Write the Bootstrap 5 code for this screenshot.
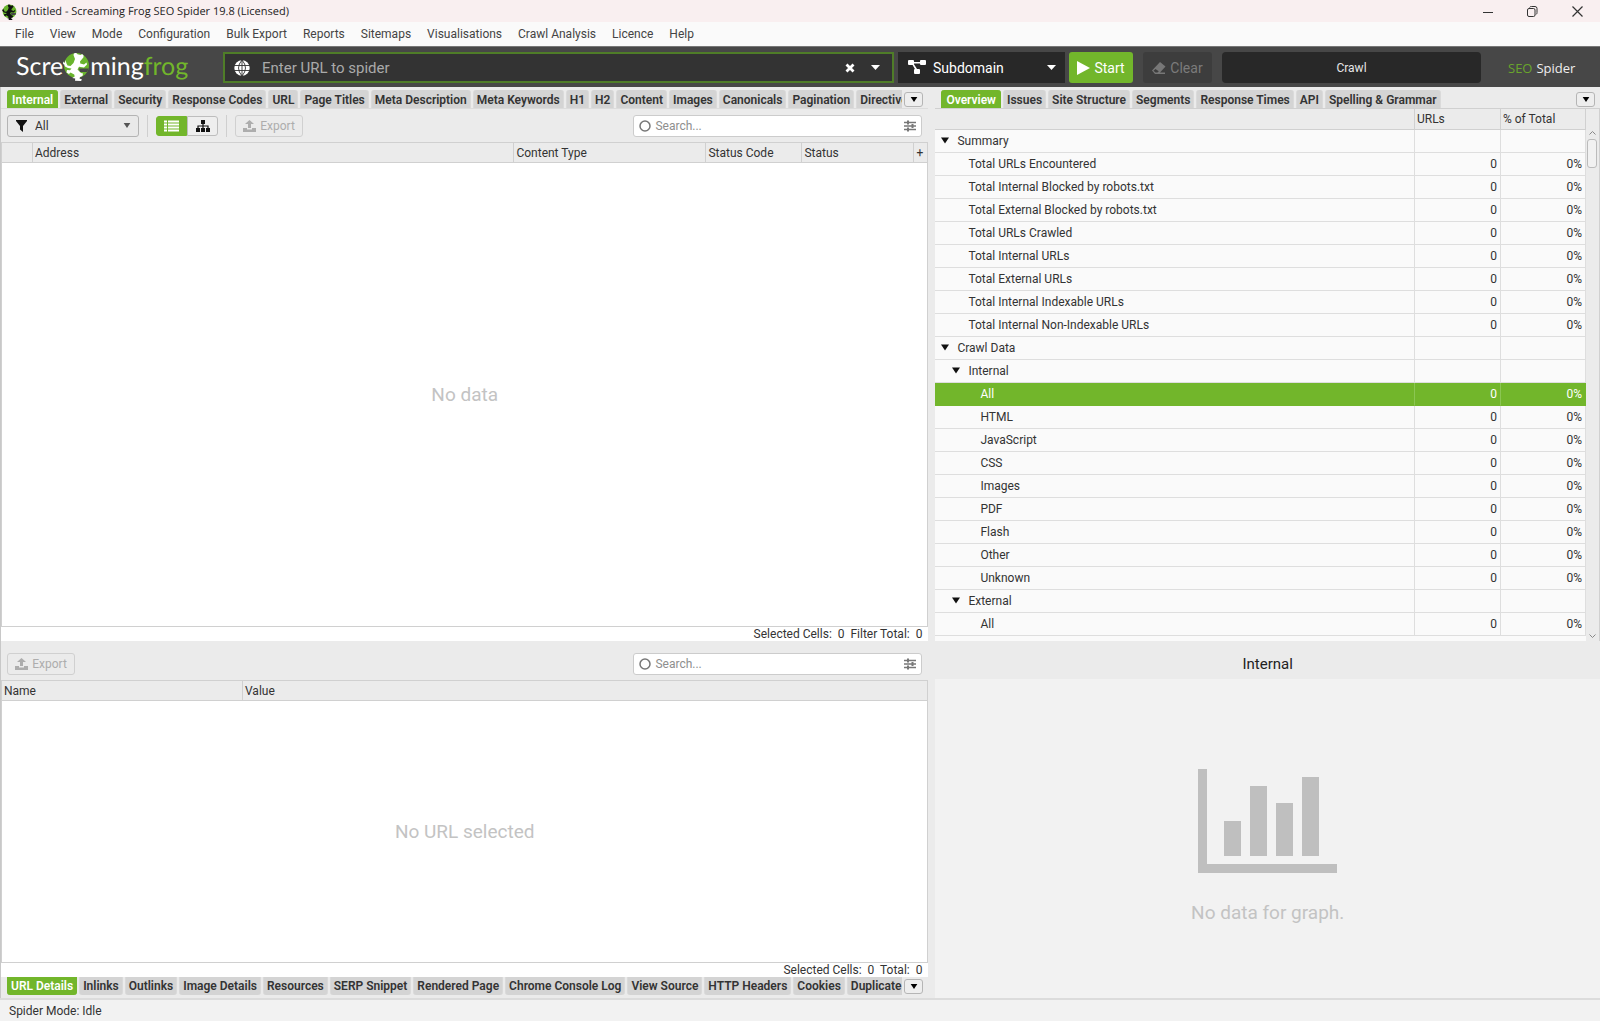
<!DOCTYPE html>
<html lang="en">
<head>
<meta charset="utf-8">
<meta name="viewport" content="width=device-width, initial-scale=1">
<title>Untitled - Screaming Frog SEO Spider 19.8 (Licensed)</title>
<link href="https://cdn.jsdelivr.net/npm/bootstrap@5.3.0/dist/css/bootstrap.min.css" rel="stylesheet">
<style>
:root{--sf-green:#72b62b;--sf-panel:#ebebeb;--sf-line:#d3d3d3;--sf-ink:#333}
body{font-family:Roboto,sans-serif;font-size:12px;line-height:16px;color:var(--sf-ink);background:#f2f2f2}
svg{display:block;flex:none}
button{border:0;background:none;padding:0;color:inherit}
.app-title{height:22px;background:#f9eff0;font-family:"Open Sans",sans-serif;font-size:11px;line-height:22px;color:#222;padding:1px 0 0 2px;text-rendering:geometricPrecision}
.win-btns button{width:45px;height:21px}
.app-menu{height:24px;background:#fafafa;padding-left:7px}
.app-menu a{color:#444;padding:4px 8px;text-decoration:none;white-space:nowrap}
.app-bar{height:41px;background:#474747;border-top:1px solid #777;padding:5px 26px 4px 16px}
.logo{width:207px;font-family:Lato,sans-serif;font-size:25px;line-height:28px;color:#fff;text-rendering:geometricPrecision}
.logo .fg{color:var(--sf-green)}
.url-box{background:#333;border:2px solid #4f7d28;padding:0 12px 0 9px;color:#fff}
.url-box input{background:none;border:0;outline:0;color:#fff;font-size:15px;min-width:0;padding:0 12px}
.url-box input::placeholder{color:#aaa;opacity:1}
.mode-box{width:167px;background:#282828;color:#fff;padding:0 9px 0 10px;margin-left:4px}
.plain-select{appearance:none;border:0;background:none;outline:0;color:inherit;min-width:0}
.mode-box select{font-size:14px;padding:0 7px}
.btn-start,.btn-clear{font-size:14px;border-radius:3px;gap:4px}
.btn-start{width:64px;background:var(--sf-green);color:#fff;margin-left:4px}
.btn-clear{width:69px;background:#3d3d3d;color:#7b7b7b;margin-left:10px}
.crawl-box{width:259px;background:#282828;color:#e6e6e6;border-radius:4px;margin:0 27px 0 10px}
.brand-name{font-family:"Open Sans",sans-serif;font-size:13px;color:#eee;white-space:nowrap;width:66px}
.brand-name span{color:#69a52c}
.pane-left{flex:928 1 0;min-width:0;background:var(--sf-panel);border-left:1px solid #c8c8c8}
.pane-right{flex:665 1 0;min-width:0;background:var(--sf-panel);margin-left:7px}
.split{background:var(--sf-panel);min-height:0}
.part-top{flex:554 1 0;min-height:0}
.part-low{flex:357 1 0;min-height:0}
.tab-strip{height:21px;padding:3px 5px 0 6px}
.tab-strip .tab-list{gap:2px;overflow:hidden;min-width:0}
.tab-strip button.tb{background:#d4d4d4;font-weight:600;padding:0 3px;white-space:nowrap;border-radius:3px 3px 0 0;flex:none;height:18px;border:1px solid #dadada;border-width:0 1px;line-height:20px}
.tab-strip button.tb.on{background:var(--sf-green);border-color:var(--sf-green);color:#fff;padding:0 4px}
.tab-strip.low{padding:0 5px 3px 6px}
.tab-strip.low button.tb{border-radius:0 0 3px 3px;line-height:18px;padding:0 3px}
.more-btn{width:19px;height:15px;border:1px solid #b5b5b5;border-radius:3px;background:#eee;flex:none;margin:2px 0 0 2px}
.tools{height:34px;padding:0 6px;border-top:1px solid #dcdcdc}
.tools.low{height:39px;border:0;padding-top:6px}
.filter-box{width:132px;height:22px;border:1px solid #b4b4b4;border-radius:3px;background:#e9e9e9;padding:0 7px 0 8px}
.filter-box select{padding:0 8px}
.vbar{width:1px;height:22px;background:#cfcfcf;margin:0 8px}
.view-btn{width:31px;height:20px;border:1px solid #bdbdbd;background:#eee;border-radius:0 3px 3px 0}
.view-btn.on{background:var(--sf-green);border-color:var(--sf-green);border-radius:3px 0 0 3px}
.btn-export{height:22px;width:68px;border:1px solid #d0d0d0;border-radius:3px;color:#adadad;gap:4px}
.find-box{width:289px;height:22px;background:#fff;border:1px solid #ccc;border-radius:3px;padding:0 5px}
.find-box input{border:0;outline:0;background:none;min-width:0;padding:0 4px}
.find-box input::placeholder{color:#8e8e8e;opacity:1}
.sheet{border:1px solid #d0d0d0;background:#fff;min-height:0}
.head-table,.tree{table-layout:fixed;width:100%;border-collapse:separate;border-spacing:0}
.head-table th{height:20px;background:var(--sf-panel);font-weight:400;padding:0 0 0 2px;border-bottom:1px solid #d0d0d0;border-left:1px solid #d0d0d0;white-space:nowrap}
.head-table th:first-child{border-left:0}
.void{font-size:19px;line-height:24px;color:#c3c3c3}
.count-line{height:14px;line-height:14px;background:#fff;padding-right:6px;white-space:pre}
.tree-wrap{background:#fafafa;overflow:hidden;min-height:0;border-top:1px solid #d0d0d0}
.tree th,.tree td{height:23px;padding:0;border-bottom:1px solid #dedede;border-right:1px solid #dedede;font-weight:400;white-space:nowrap}
.tree td{text-align:right;padding-right:3px}
.tree thead th{height:21px;background:var(--sf-panel);padding-left:2px;border-color:#d0d0d0}
.tree .d0{padding-left:6px}.tree .d1{padding-left:17px}
.tree .l1{padding-left:33px}.tree .l2{padding-left:45px}
.tree button{display:inline-block;width:16px;height:8px;vertical-align:1px;color:#111}
.tree .picked>*{background:var(--sf-green);color:#fff;border-bottom-color:var(--sf-green);border-right-color:#8bc653}
.tree .picked>:last-child{border-right-color:var(--sf-green)}
.tree-scroll{width:14px;background:var(--sf-panel);padding:22px 0 3px;border-right:1px solid #d0d0d0}
.thumb{width:10px;height:29px;border:1px solid #bbb;border-radius:3px;background:#f1f1f1;margin-top:4px}
.graph-title{height:38px;font-size:15px;color:#222}
.graph-area{background:#f2f2f2;color:#bfbfbf;padding-top:16px}
.foot{height:23px;border-top:2px solid #dcdcdc;background:#f2f2f2;padding-left:9px}
</style>
<script src="https://cdn.jsdelivr.net/npm/bootstrap@5.3.0/dist/js/bootstrap.bundle.min.js"></script>
</head>
<body class="vh-100 d-flex flex-column overflow-hidden">
<svg width="0" height="0" class="position-absolute" aria-hidden="true">
<defs>
<symbol id="frog" viewBox="0 0 27 29"><circle cx="13.500" cy="13.500" r="12.500" fill="#69b42d"/><path d="M16 16.500h9.500q-.5 2-1.500 3.500h-7z" fill="#474747"/><path d="M10.500 3q0-2.500 2.500-2 1 .3 1.500 1.200L17.500 3q2-1.500 3 .5.500 1.800-1 3l-2.500 3 .3 2 3.700 1 2.500-2 .5 2-3 3-5-.7-1.500 2.700 3.500 3.500 2 .5-.5 2.500-2.500 1-.5 1.500 2.500 1-1 1.500-6-.2.2-2.300-3-.5 2.500-1.500-.5-2-3.700-2-1.500 1.500-2.500-1.500.5-2.500 3 .3 1.500-1.800-3.500-.5L2 14.500 1 12l-1 .5.300-3 1.500 1.500.7-3 1 3.500 1 2 3 .5 3-3 1.500-4z" fill="currentColor"/></symbol>
<symbol id="tri" viewBox="0 0 8 6"><path d="M0 0h8L4 6z" fill="currentColor"/></symbol>
<symbol id="up" viewBox="0 0 13 12"><path d="M6.500 0L11 4H8v4H5V4H2zM0 8h4v1.500h5V8h4v4H0z" fill="currentColor"/></symbol>
<symbol id="tune" viewBox="0 0 12 12"><path d="M0 2.500h12M0 6h12M0 9.500h12" stroke="#777" stroke-width="1.300"/><path d="M4 .5v4M8.500 4v4M4 7.500v4" stroke="#777" stroke-width="2"/></symbol>
</defs>
</svg>

<header>
<div class="app-title d-flex align-items-center">
<svg width="15" height="16" style="color:#111"><use href="#frog"/></svg>
<span class="ms-1 flex-grow-1">Untitled - Screaming Frog SEO Spider 19.8 (Licensed)</span>
<div class="win-btns d-flex">
<button class="d-flex align-items-center justify-content-center" aria-label="Minimise"><svg width="10" height="10"><path d="M0 5.500h10" stroke="#333"/></svg></button>
<button class="d-flex align-items-center justify-content-center" aria-label="Restore"><svg width="11" height="11" fill="none" stroke="#333"><rect x=".5" y="2.500" width="7.500" height="8" rx="1.500"/><path d="M2.500 1.500q.5-1 2-1h3.500q2 0 2 2v4q0 1.500-1 2"/></svg></button>
<button class="d-flex align-items-center justify-content-center" aria-label="Close"><svg width="11" height="11"><path d="M.5.5l10 10M10.500.5l-10 10" stroke="#333" stroke-width="1.200"/></svg></button>
</div>
</div>
<nav class="app-menu d-flex align-items-center">
<a href="#">File</a><a href="#">View</a><a href="#">Mode</a><a href="#">Configuration</a><a href="#">Bulk Export</a><a href="#">Reports</a><a href="#">Sitemaps</a><a href="#">Visualisations</a><a href="#">Crawl Analysis</a><a href="#">Licence</a><a href="#">Help</a>
</nav>
<div class="app-bar d-flex align-items-stretch">
<div class="logo d-flex flex-shrink-0"><span>Scre</span><svg width="27" height="29"><use href="#frog"/></svg><span>ming</span><span class="fg">frog</span></div>
<div class="url-box d-flex align-items-center flex-grow-1">
<svg width="16" height="16" viewBox="0 0 16 16"><circle cx="8" cy="8" r="7.700" fill="#fff"/><path d="M0 5.500h16M0 10.500h16M8 0v16M8 0q-7 8 0 16M8 0q7 8 0 16" fill="none" stroke="#333" stroke-width=".9"/></svg>
<input type="text" class="flex-grow-1" placeholder="Enter URL to spider" aria-label="URL to spider">
<button aria-label="Clear URL"><svg width="10" height="10"><path d="M1.500 1.500l7 7M8.500 1.500l-7 7" stroke="#fff" stroke-width="2.800"/></svg></button>
<button class="ms-3" aria-label="Recent URLs"><svg width="9" height="5" viewBox="0 0 8 6" preserveAspectRatio="none"><path d="M0 0h8L4 6z" fill="#fff"/></svg></button>
</div>
<label class="mode-box d-flex align-items-center flex-shrink-0">
<svg width="18" height="15" fill="#fff"><rect width="6" height="5" rx="1"/><rect x="12" width="6" height="5" rx="1"/><rect x="6" y="9" width="6" height="5" rx="1"/><path d="M5 2h8v1.500H5zM4 4l1.500-.5L9 9 7.500 10z"/></svg>
<select class="plain-select flex-grow-1" aria-label="Crawl mode"><option>Subdomain</option></select>
<svg width="9" height="5" viewBox="0 0 8 6" preserveAspectRatio="none"><path d="M0 0h8L4 6z" fill="#fff"/></svg>
</label>
<button class="btn-start d-flex align-items-center justify-content-center flex-shrink-0"><svg width="13" height="14"><path d="M0 0l13 7-13 7z" fill="#fff"/></svg>Start</button>
<button class="btn-clear d-flex align-items-center justify-content-center flex-shrink-0"><svg width="14" height="12"><path d="M8 0l5.500 4.500L8 10.500h5V12H3L0 8.500z" fill="#777"/><path d="M3.500 7L1.500 8.700l2 1.800h2l1.300-1.300z" fill="#3d3d3d"/></svg>Clear</button>
<div class="crawl-box d-flex align-items-center justify-content-center flex-shrink-0">Crawl</div>
<div class="brand-name d-flex align-items-center gap-1 flex-shrink-0"><span>SEO</span>Spider</div>
</div>
</header>

<main class="d-flex flex-grow-1 split">
<section class="pane-left d-flex flex-column">
<div class="part-top d-flex flex-column">
<div class="tab-strip d-flex flex-shrink-0">
<div class="tab-list d-flex flex-grow-1">
<button class="tb on">Internal</button><button class="tb">External</button><button class="tb">Security</button><button class="tb">Response Codes</button><button class="tb">URL</button><button class="tb">Page Titles</button><button class="tb">Meta Description</button><button class="tb">Meta Keywords</button><button class="tb">H1</button><button class="tb">H2</button><button class="tb">Content</button><button class="tb">Images</button><button class="tb">Canonicals</button><button class="tb">Pagination</button><button class="tb">Directives</button>
</div>
<button class="more-btn d-flex align-items-center justify-content-center" aria-label="More tabs"><svg width="8" height="5" style="color:#000"><use href="#tri"/></svg></button>
</div>
<div class="tools d-flex align-items-center flex-shrink-0">
<label class="filter-box d-flex align-items-center"><svg width="11" height="12"><path d="M0 0h11v1L7 6v6L4 9.500V6L0 1z" fill="#111"/></svg><select class="plain-select flex-grow-1" aria-label="Filter"><option>All</option></select><svg width="8" height="5" style="color:#555"><use href="#tri"/></svg></label>
<span class="vbar"></span>
<button class="view-btn on d-flex align-items-center justify-content-center" aria-label="List view"><svg width="15" height="12"><path d="M0 1.500h3M4 1.500h11M0 4.500h3M4 4.500h11M0 7.500h3M4 7.500h11M0 10.500h3M4 10.500h11" stroke="#fff" stroke-width="2"/></svg></button>
<button class="view-btn d-flex align-items-center justify-content-center" aria-label="Tree view"><svg width="14" height="12"><path d="M5 0h4v4H5zM0 8h4v4H0zM5 8h4v4H5zM10 8h4v4h-4z" fill="#111"/><path d="M7 3v5M2 8V6h10v2" fill="none" stroke="#111" stroke-width="1.200"/></svg></button>
<span class="vbar"></span>
<button class="btn-export d-flex align-items-center justify-content-center"><svg width="13" height="12"><use href="#up"/></svg>Export</button>
<label class="find-box d-flex align-items-center ms-auto"><svg width="12" height="12"><circle cx="6" cy="6" r="5" fill="none" stroke="#777" stroke-width="1.500"/></svg><input type="text" class="flex-grow-1" placeholder="Search..." aria-label="Search table"><svg width="12" height="12"><use href="#tune"/></svg></label>
</div>
<div class="sheet flex-grow-1 d-flex flex-column">
<table class="head-table">
<colgroup><col style="width:30px"><col><col style="width:192px"><col style="width:96px"><col style="width:112px"><col style="width:14px"></colgroup>
<thead><tr><th></th><th>Address</th><th>Content Type</th><th>Status Code</th><th>Status</th><th>+</th></tr></thead>
</table>
<div class="void flex-grow-1 d-flex align-items-center justify-content-center">No data</div>
</div>
<div class="count-line text-end flex-shrink-0">Selected Cells:  0  Filter Total:  0</div>
</div>
<div class="part-low d-flex flex-column">
<div class="tools low d-flex align-items-center flex-shrink-0">
<button class="btn-export d-flex align-items-center justify-content-center"><svg width="13" height="12"><use href="#up"/></svg>Export</button>
<label class="find-box d-flex align-items-center ms-auto"><svg width="12" height="12"><circle cx="6" cy="6" r="5" fill="none" stroke="#777" stroke-width="1.500"/></svg><input type="text" class="flex-grow-1" placeholder="Search..." aria-label="Search details"><svg width="12" height="12"><use href="#tune"/></svg></label>
</div>
<div class="sheet flex-grow-1 d-flex flex-column">
<table class="head-table">
<colgroup><col style="width:240px"><col></colgroup>
<thead><tr><th>Name</th><th>Value</th></tr></thead>
</table>
<div class="void flex-grow-1 d-flex align-items-center justify-content-center">No URL selected</div>
</div>
<div class="count-line text-end flex-shrink-0">Selected Cells:  0  Total:  0</div>
<div class="tab-strip low d-flex flex-shrink-0">
<div class="tab-list d-flex flex-grow-1">
<button class="tb on">URL Details</button><button class="tb">Inlinks</button><button class="tb">Outlinks</button><button class="tb">Image Details</button><button class="tb">Resources</button><button class="tb">SERP Snippet</button><button class="tb">Rendered Page</button><button class="tb">Chrome Console Log</button><button class="tb">View Source</button><button class="tb">HTTP Headers</button><button class="tb">Cookies</button><button class="tb">Duplicate Details</button>
</div>
<button class="more-btn d-flex align-items-center justify-content-center" aria-label="More tabs"><svg width="8" height="5" style="color:#000"><use href="#tri"/></svg></button>
</div>
</div>
</section>

<section class="pane-right d-flex flex-column">
<div class="part-top d-flex flex-column">
<div class="tab-strip d-flex flex-shrink-0">
<div class="tab-list d-flex flex-grow-1">
<button class="tb on">Overview</button><button class="tb">Issues</button><button class="tb">Site Structure</button><button class="tb">Segments</button><button class="tb">Response Times</button><button class="tb">API</button><button class="tb">Spelling &amp; Grammar</button>
</div>
<button class="more-btn d-flex align-items-center justify-content-center" aria-label="More tabs"><svg width="8" height="5" style="color:#000"><use href="#tri"/></svg></button>
</div>
<div class="tree-wrap d-flex flex-grow-1">
<div class="flex-grow-1">
<table class="tree">
<colgroup><col><col style="width:86px"><col style="width:85px"></colgroup>
<thead><tr><th></th><th>URLs</th><th>% of Total</th></tr></thead>
<tbody>
<tr><th class="d0"><button aria-label="Collapse Summary"><svg width="8" height="7"><use href="#tri"/></svg></button>Summary</th><td></td><td></td></tr>
<tr><th class="l1">Total URLs Encountered</th><td>0</td><td>0%</td></tr>
<tr><th class="l1">Total Internal Blocked by robots.txt</th><td>0</td><td>0%</td></tr>
<tr><th class="l1">Total External Blocked by robots.txt</th><td>0</td><td>0%</td></tr>
<tr><th class="l1">Total URLs Crawled</th><td>0</td><td>0%</td></tr>
<tr><th class="l1">Total Internal URLs</th><td>0</td><td>0%</td></tr>
<tr><th class="l1">Total External URLs</th><td>0</td><td>0%</td></tr>
<tr><th class="l1">Total Internal Indexable URLs</th><td>0</td><td>0%</td></tr>
<tr><th class="l1">Total Internal Non-Indexable URLs</th><td>0</td><td>0%</td></tr>
<tr><th class="d0"><button aria-label="Collapse Crawl Data"><svg width="8" height="7"><use href="#tri"/></svg></button>Crawl Data</th><td></td><td></td></tr>
<tr><th class="d1"><button aria-label="Collapse Internal"><svg width="8" height="7"><use href="#tri"/></svg></button>Internal</th><td></td><td></td></tr>
<tr class="picked"><th class="l2">All</th><td>0</td><td>0%</td></tr>
<tr><th class="l2">HTML</th><td>0</td><td>0%</td></tr>
<tr><th class="l2">JavaScript</th><td>0</td><td>0%</td></tr>
<tr><th class="l2">CSS</th><td>0</td><td>0%</td></tr>
<tr><th class="l2">Images</th><td>0</td><td>0%</td></tr>
<tr><th class="l2">PDF</th><td>0</td><td>0%</td></tr>
<tr><th class="l2">Flash</th><td>0</td><td>0%</td></tr>
<tr><th class="l2">Other</th><td>0</td><td>0%</td></tr>
<tr><th class="l2">Unknown</th><td>0</td><td>0%</td></tr>
<tr><th class="d1"><button aria-label="Collapse External"><svg width="8" height="7"><use href="#tri"/></svg></button>External</th><td></td><td></td></tr>
<tr><th class="l2">All</th><td>0</td><td>0%</td></tr>
</tbody>
</table>
</div>
<div class="tree-scroll d-flex flex-column align-items-center flex-shrink-0">
<svg width="7" height="4" fill="none" stroke="#888"><path d="M.5 3.500l3-3 3 3"/></svg>
<div class="thumb"></div>
<svg class="mt-auto" width="7" height="4" fill="none" stroke="#888"><path d="M.5.5l3 3 3-3"/></svg>
</div>
</div>
</div>
<div class="part-low d-flex flex-column">
<div class="graph-title d-flex align-items-center justify-content-center flex-shrink-0 pt-2">Internal</div>
<div class="graph-area flex-grow-1 d-flex flex-column align-items-center justify-content-center">
<svg width="139" height="104" viewBox="0 0 139 104" fill="#bfbfbf"><path d="M0 0h9v95h130v9H0zM26 52h17v35H26zM52 17h17v70H52zM78 34h17v53H78zM104 8h17v79h-17z"/></svg>
<div class="void mt-4 pt-1">No data for graph.</div>
</div>
</div>
</section>
</main>
<footer class="foot d-flex align-items-center">Spider Mode: Idle</footer>
</body>
</html>
